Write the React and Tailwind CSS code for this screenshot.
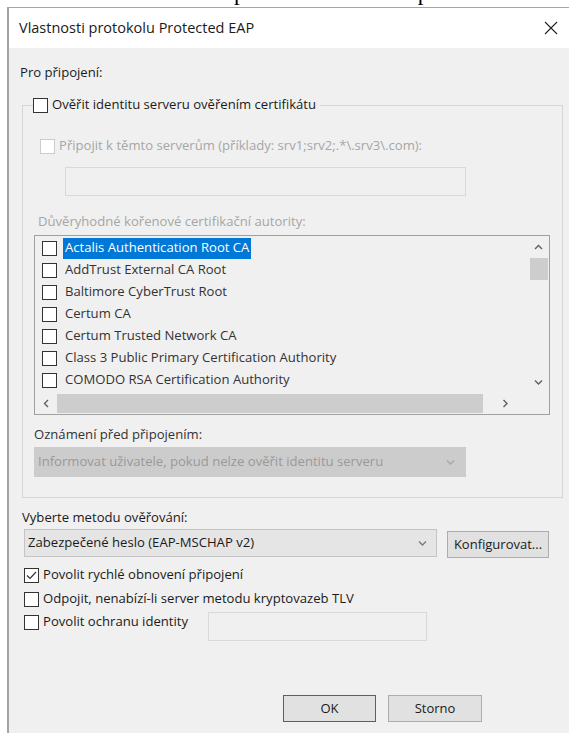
import { useState } from 'react';

const ui = { fontFamily: '"Open Sans", "Noto Sans", sans-serif' };

const certs = [
  'Actalis Authentication Root CA',
  'AddTrust External CA Root',
  'Baltimore CyberTrust Root',
  'Certum CA',
  'Certum Trusted Network CA',
  'Class 3 Public Primary Certification Authority',
  'COMODO RSA Certification Authority',
];

function Box({ checked, disabled, onClick }) {
  return (
    <span
      onClick={onClick}
      className={`flex h-[15px] w-[15px] shrink-0 items-center justify-center border bg-white ${
        disabled ? 'border-[#cccccc]' : 'border-[#333333]'
      }`}
    >
      {checked && (
        <svg width="11" height="9" viewBox="0 0 11 9" fill="none">
          <path d="M1 4.5l3 3L10 1" stroke="#333" strokeWidth="1.2" />
        </svg>
      )}
    </span>
  );
}

function Chevron({ dir = 'down', color = '#606060', w = 9 }) {
  const paths = {
    up: 'M1 5l3.5-3.5L8 5',
    down: 'M1 1.5L4.5 5 8 1.5',
    left: 'M5 1L1.5 4.5 5 8',
    right: 'M1.5 1L5 4.5 1.5 8',
  };
  const horiz = dir === 'up' || dir === 'down';
  return (
    <svg width={horiz ? w : 7} height={horiz ? 7 : w} viewBox={horiz ? '0 0 9 7' : '0 0 7 9'} fill="none">
      <path d={paths[dir]} stroke={color} strokeWidth="1.4" />
    </svg>
  );
}

export default function App() {
  const [fastReconnect, setFastReconnect] = useState(true);

  return (
    <div className="h-[733px] w-[569px] overflow-hidden bg-white" style={ui}>
      {/* caption line above the dialog, only its lower edge shows */}
      <div className="h-[7px] overflow-hidden">
        <p
          className="-mt-[19px] ml-[28px] whitespace-nowrap text-[23px] leading-none text-black"
          style={{ fontFamily: '"Liberation Serif", serif' }}
        >
          Obrázek 5: Vlastnosti protokolu PEAP na počítači s Windows
        </p>
      </div>

      <div className="ml-[7px] h-[740px] w-[600px] border-l-2 border-t border-[#a3a3a3] bg-[#f0f0f0]">
        {/* title bar */}
        <div className="flex h-[40px] w-full items-center bg-white">
          <span className="ml-[10px] text-[14.5px] text-[#1a1a1a]">Vlastnosti protokolu Protected EAP</span>
          <svg className="ml-auto mr-[49px]" width="14" height="14" viewBox="0 0 14 14">
            <path d="M1 1l12 12M13 1L1 13" stroke="#222" strokeWidth="1.1" />
          </svg>
        </div>

        <div className="text-[13.1px] text-[#1a1a1a]">
          <div className="ml-[11px] mt-[16px] flex h-[18px] items-center">Pro připojení:</div>

          <fieldset className="ml-[13px] mt-[15px] w-[541px] border border-[#d5d5d5] p-0 pb-[20px]">
            <legend className="ml-[10px] flex h-[16px] items-center gap-[4px] pr-[4px]">
              <Box />
              <span>Ověřit identitu serveru ověřením certifikátu</span>
            </legend>

            <div className="ml-[17px] mt-[25px] flex h-[16px] items-center gap-[4px] text-[#a6a6a6]">
              <Box disabled />
              <span>Připojit k těmto serverům (příklady: srv1;srv2;.*\.srv3\.com):</span>
            </div>

            <div className="ml-[42px] mt-[13px] h-[29px] w-[401px] border border-[#d9d9d9] bg-[#f0f0f0]" />

            <div className="ml-[15px] mt-[18px] flex h-[16px] items-center text-[#a6a6a6]">
              Důvěryhodné kořenové certifikační autority:
            </div>

            {/* certificate list with both scrollbars */}
            <div className="ml-[11px] mt-[5px] grid h-[180px] w-[516px] grid-cols-[1fr_21px] grid-rows-[1fr_21px] border border-[#a0a0a0] bg-[#f0f0f0]">
              <div className="overflow-hidden pt-[1px] text-[#333333]">
                {certs.map((c, i) => (
                  <div key={c} className="flex h-[22px] items-center gap-[6px] whitespace-nowrap pl-[7px]">
                    <Box />
                    <span
                      className={`flex h-[21px] items-center px-[2px] ${
                        i === 0 ? 'bg-[#0078d7] text-white' : ''
                      }`}
                    >
                      {c}
                    </span>
                  </div>
                ))}
              </div>

              <div className="flex flex-col items-center">
                <div className="flex h-[22px] w-full items-center justify-center">
                  <Chevron dir="up" />
                </div>
                <div className="h-[22px] w-[18px] bg-[#cdcdcd]" />
                <div className="flex-1" />
                <div className="flex h-[22px] w-full items-center justify-center">
                  <Chevron dir="down" />
                </div>
              </div>

              <div className="flex items-center">
                <div className="flex h-full w-[22px] items-center justify-center">
                  <Chevron dir="left" />
                </div>
                <div className="h-[19px] w-[426px] bg-[#cdcdcd]" />
                <div className="flex h-full flex-1 items-center justify-center">
                  <Chevron dir="right" />
                </div>
              </div>
              <div />
            </div>

            <div className="ml-[11px] mt-[12px] flex h-[16px] items-center text-[#333333]">
              Oznámení před připojením:
            </div>
            <div className="ml-[11px] mt-[4px] flex h-[30px] w-[432px] items-center justify-between bg-[#cccccc] pl-[4px] pr-[10px] text-[#999999]">
              <span>Informovat uživatele, pokud nelze ověřit identitu serveru</span>
              <Chevron dir="down" color="#a8a8a8" w={11} />
            </div>
          </fieldset>

          <div className="ml-[13px] mt-[12px] flex h-[16px] items-center">Vyberte metodu ověřování:</div>

          <div className="mt-[2px] flex items-center">
            <div className="ml-[15px] flex h-[28px] w-[413px] items-center justify-between border border-[#c4c4c4] bg-[#e5e5e5] pl-[3px] pr-[8px]">
              <span>Zabezpečené heslo (EAP-MSCHAP v2)</span>
              <Chevron dir="down" color="#7a7a7a" w={11} />
            </div>
            <button className="ml-[10px] mt-[3px] h-[27px] w-[102px] border border-[#adadad] bg-[#e1e1e1] text-[13px]">
              Konfigurovat...
            </button>
          </div>

          <div className="ml-[15px] mt-[9px] flex h-[16px] items-center gap-[4px]">
            <Box checked={fastReconnect} onClick={() => setFastReconnect(!fastReconnect)} />
            <span>Povolit rychlé obnovení připojení</span>
          </div>
          <div className="ml-[15px] mt-[8px] flex h-[16px] items-center gap-[4px]">
            <Box />
            <span>Odpojit, nenabízí-li server metodu kryptovazeb TLV</span>
          </div>
          <div className="ml-[15px] mt-[5px] flex items-start">
            <div className="mt-[2px] flex h-[16px] w-[184px] items-center gap-[4px]">
              <Box />
              <span>Povolit ochranu identity</span>
            </div>
            <div className="h-[29px] w-[219px] border border-[#d9d9d9] bg-[#f0f0f0]" />
          </div>

          <div className="mt-[54px] flex">
            <button className="ml-[274px] h-[27px] w-[93px] border border-[#0078d7] bg-[#e1e1e1] text-[13px]">
              OK
            </button>
            <button className="ml-[12px] h-[27px] w-[94px] border border-[#adadad] bg-[#e1e1e1] text-[13px]">
              Storno
            </button>
          </div>
        </div>
      </div>
    </div>
  );
}
